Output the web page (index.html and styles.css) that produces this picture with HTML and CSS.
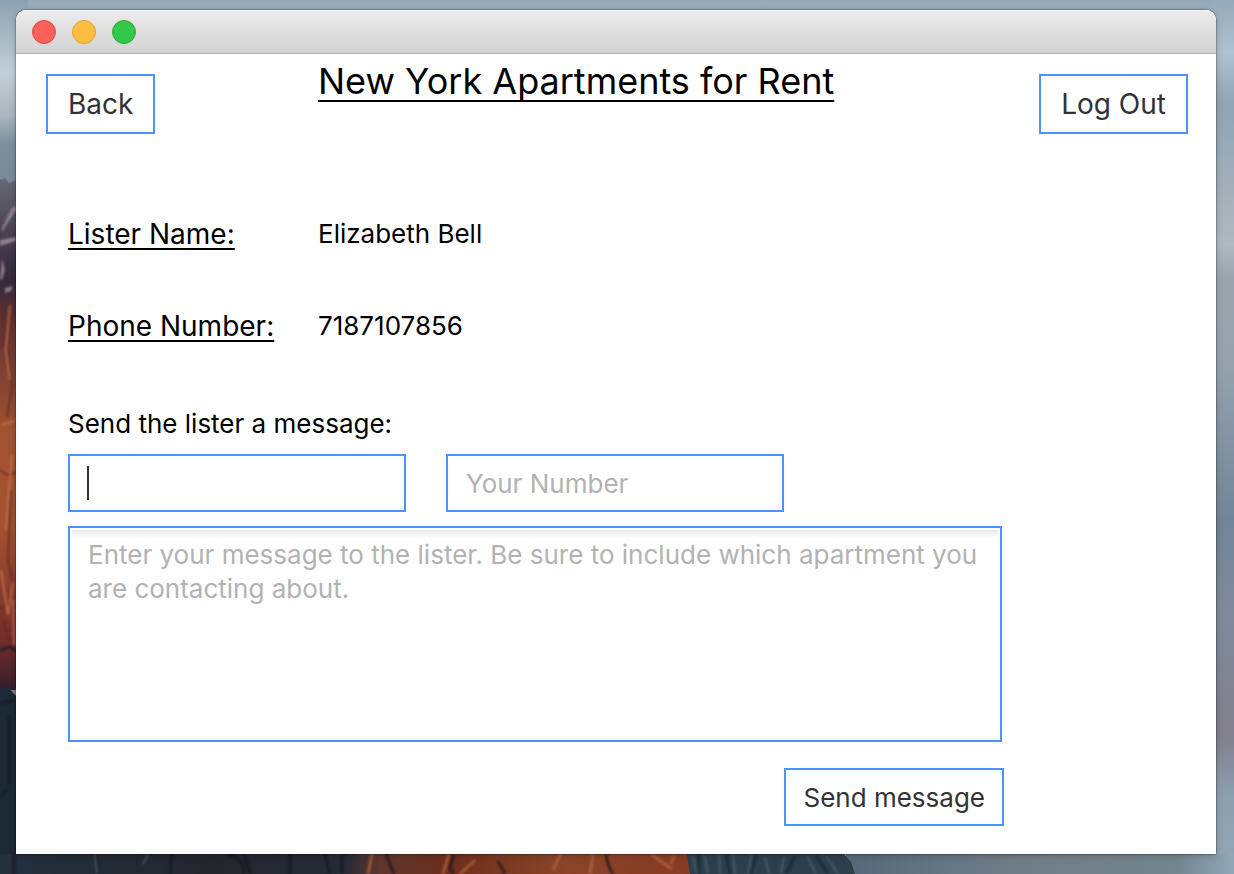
FILE: index.html
```html
<!DOCTYPE html>
<html lang="en">
<head>
<meta charset="utf-8">
<meta name="viewport" content="width=device-width, initial-scale=1">
<title>New York Apartments for Rent</title>
<link rel="stylesheet" href="styles.css">
</head>
<body>
<svg class="wallpaper" viewBox="0 0 1234 874" preserveAspectRatio="none" aria-hidden="true">
  <defs>
    <linearGradient id="sky" x2="0" y2="1">
      <stop offset="0" stop-color="#95a9b9"/><stop offset=".06" stop-color="#adc2d2"/>
      <stop offset=".12" stop-color="#8fa4b4"/><stop offset=".28" stop-color="#b0b8c0"/>
      <stop offset=".32" stop-color="#9aa4af"/><stop offset=".42" stop-color="#94a2ae"/>
      <stop offset=".6" stop-color="#728499"/><stop offset=".7" stop-color="#7f8b9b"/>
      <stop offset=".84" stop-color="#827f8e"/><stop offset=".91" stop-color="#8ca0b0"/>
      <stop offset="1" stop-color="#91a6b6"/>
    </linearGradient>
    <linearGradient id="haze" x2="0" y2="1">
      <stop offset="0" stop-color="#8ea1b0"/><stop offset=".3" stop-color="#c1d0da"/>
      <stop offset=".48" stop-color="#aab6bf"/><stop offset=".6" stop-color="#7c90a0"/>
      <stop offset="1" stop-color="#738291"/>
    </linearGradient>
    <linearGradient id="cliff" x2="0" y2="1">
      <stop offset="0" stop-color="#686877"/><stop offset=".12" stop-color="#453d4e"/>
      <stop offset=".2" stop-color="#35283a"/>
      <stop offset=".29" stop-color="#653431"/><stop offset=".5" stop-color="#a35331"/>
      <stop offset=".68" stop-color="#a45230"/><stop offset=".9" stop-color="#762e2b"/>
      <stop offset="1" stop-color="#351d2c"/>
    </linearGradient>
    <linearGradient id="base">
      <stop offset="0" stop-color="#22303e"/><stop offset=".3" stop-color="#24262d"/>
      <stop offset=".5" stop-color="#252a35"/><stop offset=".55" stop-color="#5f352e"/>
      <stop offset=".65" stop-color="#6e2e1d"/><stop offset=".82" stop-color="#8b4428"/>
      <stop offset="1" stop-color="#873b24"/>
    </linearGradient>
    <linearGradient id="lower">
      <stop offset="0" stop-color="#566878"/><stop offset=".45" stop-color="#707e89"/>
      <stop offset=".85" stop-color="#74858f"/><stop offset="1" stop-color="#91a7b7"/>
    </linearGradient>
  </defs>
  <path d="M0 0h1234v874H0z" fill="url(#sky)"/>
  <path d="M0 0h28v240H0z" fill="url(#haze)"/>
  <path d="M0 180l5-2 4 5 7-3v510H0z" fill="url(#cliff)"/>
  <path d="M0 690l7-4 9 10v178H0z" fill="#1c2a37"/>
  <path d="M0 854h690v20H0z" fill="url(#base)"/>
  <path d="M846 854h388v20H846z" fill="url(#lower)"/>
  <path d="M687 854h157l7 8 4 12H690z" fill="#2e3f4c"/>
  <g class="texture">
    <path d="M0 240l16-3v4L0 246zM2 258l3 12-3 10H0zM5 288l8-2-2 5-6 2zM2 228l10-20 4-3v5l-8 12-6 10z" fill="#b09ba9"/>
    <path d="M0 300l5 9-3 38m10-45l-4 45 4 40-5 30M0 470l7 5 9-2M11 490L8 560l4 20M0 610l8-7 8 6M4 620l4 20 8-4" fill="none" stroke="#5a2825" stroke-width="2"/>
    <path d="M10 305l-4 45 4 30M1 425l14-4M12 455L6 530M1 570l7 45 5-32M13 600l1 45" fill="none" stroke="#ce7950" stroke-width="2"/>
    <path d="M0 650l10-3 6 4M0 703l16-3M9 715v70M0 797l8-8" fill="none" stroke="#111b28" stroke-width="3"/>
    <path d="M14 854v20M96 854l2 20M172 854l-2 20M226 856q16-3 18 18M244 854l6 20M290 854v20M325 854l5 20M342 854v20M386 854l8 20M454 854l-4 14 3 6M505 874l-7-13M606 854q2 13 7 20" fill="none" stroke="#14171d" stroke-width="3"/>
    <path d="M372 854l-4 20M449 854l-6 20M475 860l-15 14M561 854l-8 16M593 855l-3 19M652 855l20 14M674 856l-3 8" fill="none" stroke="#b8683f" stroke-width="3"/>
    <path d="M95 854l2 20M148 855l-5 9M693 856l4 18M705 856l3 18M719 855l1 19M733 855l2 19M752 855l-4 19M765 857l4 17M784 857l-3 17M807 856l9 18M826 856l12 18" fill="none" stroke="#526472" stroke-width="2"/>
    <path d="M699 854v20M726 854l4 20M756 854l-5 20M795 856l-9 18M816 856l12 18" fill="none" stroke="#142631" stroke-width="3"/>
  </g>
</svg>
<div class="window">
  <div class="titlebar">
    <button class="dot close" type="button" aria-label="Close"></button>
    <button class="dot minimize" type="button" aria-label="Minimize"></button>
    <button class="dot zoom" type="button" aria-label="Zoom"></button>
  </div>
  <header class="header">
    <div><button class="button nav-button" type="button">Back</button></div>
    <h1 class="title">New York Apartments for Rent</h1>
    <button class="button nav-button" type="button">Log Out</button>
  </header>
  <main class="content">
    <dl class="details">
      <dt>Lister Name:</dt><dd>Elizabeth Bell</dd>
      <dt>Phone Number:</dt><dd>7187107856</dd>
    </dl>
    <form class="form">
      <label class="form-label" for="message">Send the lister a message:</label>
      <div class="fields">
        <input class="field active" type="text" aria-label="Your name">
        <input class="field" type="tel" placeholder="Your Number" aria-label="Your number">
      </div>
      <textarea class="message" id="message" placeholder="Enter your message to the lister. Be sure to include which apartment you are contacting about."></textarea>
      <button class="button send-button" type="button">Send message</button>
    </form>
  </main>
</div>
</body>
</html>
```
FILE: styles.css
```css
* { box-sizing: border-box; }

body {
  margin: 0;
  min-height: 100vh;
  padding: 10px 18px 20px 16px;
  display: flex;
  font-family: Inter, "Liberation Sans", sans-serif;
  font-size: 26px;
  color: #000;
}

button, input, textarea { font: inherit; }

.wallpaper {
  position: absolute;
  inset: 0;
  z-index: -1;
  width: 100%;
  height: 100%;
}

.texture {
  opacity: .7;
  filter: blur(1px);
}

.window {
  flex: 1;
  min-width: 0;
  background: #fff;
  border-radius: 10px 10px 0 0;
  box-shadow: 0 0 2px rgba(0, 0, 0, .8), 0 2px 8px rgba(0, 0, 0, .15);
}

.titlebar {
  display: flex;
  align-items: center;
  gap: 16px;
  height: 44px;
  padding: 0 16px;
  border-radius: 10px 10px 0 0;
  border-bottom: 1px solid #b0b0b0;
  background: linear-gradient(#ececec, #d2d2d2);
  box-shadow: inset 0 1px #f5f5f5;
}

.dot {
  width: 24px;
  height: 24px;
  padding: 0;
  border: 1px solid;
  border-radius: 50%;
}

.close { background: #fc605b; border-color: #df4744; }
.minimize { background: #fdbd41; border-color: #de9f34; }
.zoom { background: #34c84a; border-color: #27aa35; }

.header {
  display: grid;
  grid-template-columns: 272px 1fr auto;
  align-items: start;
  padding: 5px 28px 0 30px;
}

.title {
  margin: 0;
  font-size: 36px;
  font-weight: 400;
  line-height: 44px;
  text-decoration: underline 2px;
  text-underline-offset: 6px;
  text-decoration-skip-ink: none;
}

.button {
  border: 2px solid #4b93ff;
  background: #fff;
  color: #333;
}

.nav-button {
  height: 60px;
  margin-top: 15px;
  padding: 0 20px;
  font-size: 28px;
}

.content { padding: 78px 28px 28px 52px; }

.details {
  display: grid;
  grid-template-columns: 250px 1fr;
  row-gap: 48px;
  margin: 0 0 58px;
  line-height: 44px;
}

.details dt {
  font-size: 28px;
  text-decoration: underline 2px;
  text-underline-offset: 4px;
  text-decoration-skip-ink: none;
}

.details dd { margin: 0; }

.form {
  display: flex;
  flex-direction: column;
  max-width: 936px;
}

.form-label {
  margin-bottom: 12px;
  line-height: 36px;
}

.fields {
  display: flex;
  gap: 40px;
  margin-bottom: 14px;
}

.field, .message {
  border: 2px solid #4b93ff;
  border-radius: 0;
  outline: 0;
  background: #fff;
  color: #333;
}

.field {
  flex: 0 1 338px;
  min-width: 0;
  height: 58px;
  padding: 0 18px;
}

.active {
  background: linear-gradient(#333, #333) 17px center / 2px 34px no-repeat #fff;
}

.message {
  height: 216px;
  margin-right: 2px;
  padding: 10px 18px;
  line-height: 34px;
  resize: none;
  background: linear-gradient(#e8e8e8, #fff) 2px 2px / calc(100% - 4px) 8px no-repeat #fff;
}

::placeholder { color: #b2b2b2; opacity: 1; }

.send-button {
  align-self: flex-end;
  height: 58px;
  margin-top: 26px;
  padding: 0 17px;
}
```
